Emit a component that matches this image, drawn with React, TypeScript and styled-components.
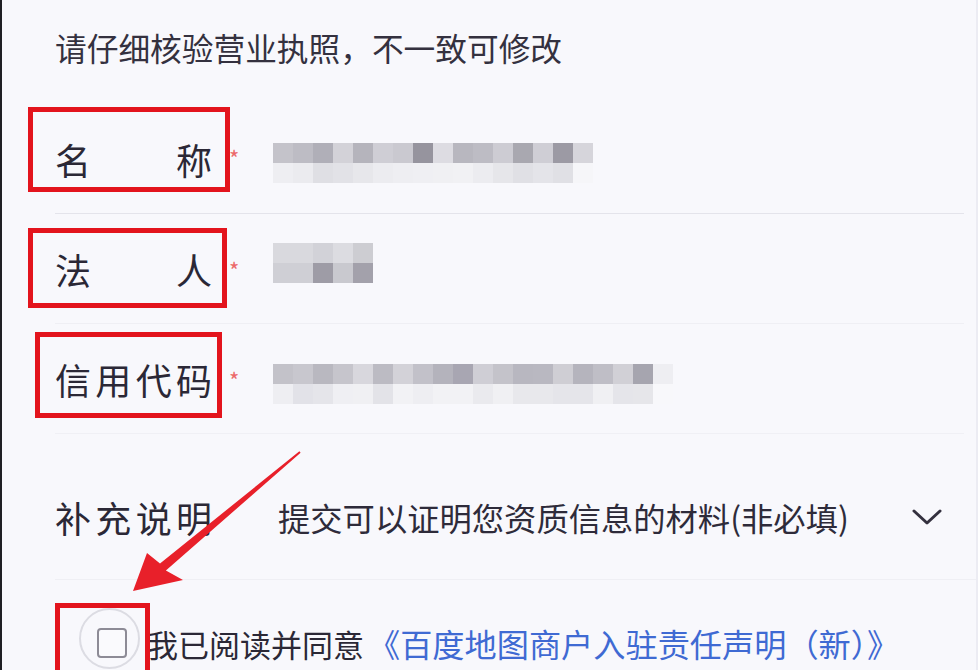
import React from "react";
import styled, { createGlobalStyle } from "styled-components";

const Global = createGlobalStyle`
  html, body { margin: 0; padding: 0; background: #f8f8fc; }
  * { box-sizing: border-box; }
`;

const Page = styled.div`
  position: relative;
  width: 978px;
  height: 670px;
  overflow: hidden;
  background: #f8f8fc;
  border-left: 2px solid #1f1f24;
  border-right: 2px solid #ececf3;
  font-family: "Noto Sans CJK SC", "Noto Sans", sans-serif;
  color: #2e2b3a;
`;

const Header = styled.div`
  height: 104px;
  display: flex;
  align-items: center;
  padding: 0 0 10px 53px;
  font-size: 31.7px;
  color: #34313f;
`;

const FieldRow = styled.div<{ $line: string }>`
  display: flex;
  align-items: center;
  height: 110px;
  margin-left: 53px;
  margin-right: 12px;
  border-bottom: 1px solid ${(p) => p.$line};
`;

const Annotated = styled.div<{ $t: number; $r: number; $b: number; $l: number }>`
  position: relative;
  display: flex;
  align-items: center;
  &::after {
    content: "";
    position: absolute;
    top: ${(p) => p.$t}px;
    right: ${(p) => p.$r}px;
    bottom: ${(p) => p.$b}px;
    left: ${(p) => p.$l}px;
    border: 5px solid #e3141d;
    pointer-events: none;
  }
`;

const Label = styled.div`
  width: 157px;
  font-size: 36px;
  line-height: 50px;
  text-align: justify;
  text-align-last: justify;
  color: #2b2836;
`;

const Star = styled.span<{ $dy: number }>`
  width: 61px;
  padding-left: 17px;
  color: #ec6a6a;
  font-size: 22px;
  line-height: 1;
  position: relative;
  top: ${(p) => p.$dy}px;
`;

const Mosaic = styled.div<{ $n: number; $dy: number }>`
  display: grid;
  grid-template-columns: repeat(${(p) => p.$n}, 20px);
  grid-auto-rows: 20px;
  margin-top: ${(p) => p.$dy}px;
  filter: blur(0.4px);
`;

const Cell = styled.div<{ $c: string }>`
  background: ${(p) => p.$c};
`;

const ExtraRow = styled.div`
  display: flex;
  align-items: center;
  height: 146px;
  padding-top: 20px;
  margin-left: 53px;
  border-bottom: 1px solid #efeff4;
`;

const Desc = styled.div`
  margin-left: 66px;
  font-size: 32.3px;
  color: #2e2b3a;
  white-space: nowrap;
`;

const Chevron = styled.svg`
  margin-left: auto;
  margin-right: 34px;
  flex-shrink: 0;
`;

const AgreeRow = styled.div`
  display: flex;
  align-items: center;
  margin-left: 77px;
  padding-top: 28px;
`;

const Ring = styled.div`
  width: 61px;
  height: 61px;
  border-radius: 50%;
  border: 2px solid #dcdce3;
  display: flex;
  align-items: center;
  justify-content: center;
`;

const Box = styled.div`
  width: 30px;
  height: 30px;
  border: 2px solid #8d8b96;
  border-radius: 4px;
  margin: 9px 0 0 4px;
  background: #fafafd;
`;

const AgreeText = styled.div`
  margin-left: 7px;
  margin-top: 8px;
  font-size: 31px;
  white-space: nowrap;
  color: #2b2836;
`;

const Link = styled.span`
  color: #3f6ad3;
  margin-left: 4px;
  font-size: 32.2px;
`;

const ArrowSvg = styled.svg`
  position: absolute;
  left: -2px;
  top: 0;
  pointer-events: none;
`;

const nameCells = [
  ["#c4c3ca", "#bdbcc4", "#b0afb8", "#d3d2d8", "#b5b4bc", "#cfced5", "#cac9d0", "#96949e", "#dddce2", "#b8b7bf", "#bdbcc4", "#cdccd3", "#a9a8b0", "#cfced5", "#9c9aa4", "#d6d5db"],
  ["#eeeef2", "#ebebef", "#dfdfe4", "#e2e2e7", "#e7e7eb", "#ececf0", "#eeeef2", "#efeff3", "#f0f0f3", "#f1f1f4", "#ececf0", "#e6e6ea", "#e0e0e5", "#e4e4e9", "#e0e0e5", "#f6f6f9"],
];

const legalCells = [
  ["#d9d9de", "#d9d9de", "#d2d2d8", "#dcdce1", "#cdcdd2"],
  ["#cfcfd5", "#cfcfd5", "#9e9ca6", "#c9c9cf", "#a3a1ab"],
];

const codeCells = [
  ["#c3c2c9", "#c8c7ce", "#b9b8c0", "#c6c5cc", "#d8d7dd", "#bcbbc3", "#d3d2d8", "#c2c1c9", "#b4b3bc", "#a8a6b2", "#cfced5", "#c4c3ca", "#b8b7c0", "#b9b8c1", "#cfced4", "#b5b4bd", "#bfbec6", "#d1d0d6", "#a6a5af", "#eeeef2"],
  ["#eeeef2", "#e2e2e8", "#e5e5ea", "#efeff3", "#f0f0f3", "#e3e3e8", "#f2f2f5", "#eeeef2", "#f2f2f5", "#f2f2f5", "#eaeaee", "#f0f0f3", "#e8e8ec", "#e8e8ec", "#e5e5ea", "#e5e5ea", "#f0f0f3", "#e5e5ea", "#e6e6ea", "#f8f8fb"],
];

function Blur({ cells, dy }: { cells: string[][]; dy: number }) {
  return (
    <Mosaic $n={cells[0].length} $dy={dy}>
      {cells.flatMap((row, r) => row.map((c, i) => <Cell key={`${r}-${i}`} $c={c} />))}
    </Mosaic>
  );
}

export default function App() {
  return (
    <>
      <Global />
      <Page>
        <Header>请仔细核验营业执照，不一致可修改</Header>

        <FieldRow $line="#e4e4eb">
          <Annotated $t={-27} $r={-18} $b={-8} $l={-27}>
            <Label>名称</Label>
          </Annotated>
          <Star $dy={-2}>*</Star>
          <Blur cells={nameCells} dy={8} />
        </FieldRow>

        <FieldRow $line="#efeff4">
          <Annotated $t={-16} $r={-15} $b={-14} $l={-27}>
            <Label>法人</Label>
          </Annotated>
          <Star $dy={0}>*</Star>
          <Blur cells={legalCells} dy={-12} />
        </FieldRow>

        <FieldRow $line="#f0f0f5">
          <Annotated $t={-22} $r={-10} $b={-14} $l={-20}>
            <Label>信用代码</Label>
          </Annotated>
          <Star $dy={0}>*</Star>
          <Blur cells={codeCells} dy={10} />
        </FieldRow>

        <ExtraRow>
          <Label>补充说明</Label>
          <Desc>提交可以证明您资质信息的材料(非必填)</Desc>
          <Chevron width="30" height="18" viewBox="0 0 30 18">
            <polyline points="2,3 15,15 28,3" fill="none" stroke="#34313f" strokeWidth="3" strokeLinecap="round" strokeLinejoin="round" />
          </Chevron>
        </ExtraRow>

        <AgreeRow>
          <Annotated $t={-5} $r={-10} $b={-20} $l={-24}>
            <Ring>
              <Box />
            </Ring>
          </Annotated>
          <AgreeText>
            我已阅读并同意<Link>《百度地图商户入驻责任声明（新）》</Link>
          </AgreeText>
        </AgreeRow>

        <ArrowSvg width="978" height="670" viewBox="0 0 978 670">
          <polygon
            points="133,591 147,553 160,563.6 299.4,451.2 300.6,452.8 165.9,570.4 183,580"
            fill="#e8202a"
          />
        </ArrowSvg>
      </Page>
    </>
  );
}
